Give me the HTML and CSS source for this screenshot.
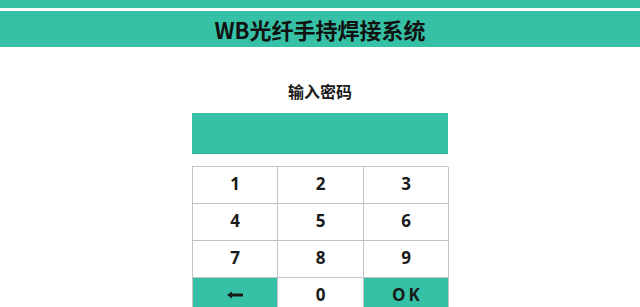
FILE: index.html
```html
<!DOCTYPE html>
<html lang="zh-CN">
<head>
    <meta charset="UTF-8">
    <meta name="viewport" content="width=device-width, initial-scale=1.0">
    <title>WB光纤手持焊接系统</title>
    <link rel="stylesheet" href="styles.css">
</head>
<body>
    <div class="top-strip"></div>
    <header class="header">
        <h1 class="title">WB光纤手持焊接系统</h1>
    </header>
    <main class="login">
        <div class="label">输入密码</div>
        <div class="password-box"></div>
        <div class="keypad">
            <button class="key">1</button>
            <button class="key">2</button>
            <button class="key">3</button>
            <button class="key">4</button>
            <button class="key">5</button>
            <button class="key">6</button>
            <button class="key">7</button>
            <button class="key">8</button>
            <button class="key">9</button>
            <button class="key key-action">
                <svg class="back-icon" width="16" height="8" viewBox="0 0 16 8">
                    <polygon points="0,4 5,0.5 5,7.5" fill="#1a1a1a"/>
                    <rect x="4" y="2.5" width="12" height="3" fill="#1a1a1a"/>
                </svg>
            </button>
            <button class="key">0</button>
            <button class="key key-action key-ok">OK</button>
        </div>
    </main>
</body>
</html>
```

FILE: styles.css
```css
body {
    margin: 0;
    padding: 0;
    background-color: white;
    font-family: "Open Sans", "Noto Sans CJK SC", sans-serif;
    color: #1a1a1a;
}

.top-strip {
    height: 8px;
    background-color: #36c1a6;
    margin-bottom: 3px;
}

.header {
    height: 36px;
    background-color: #36c1a6;
    display: flex;
    justify-content: center;
    align-items: center;
}

.title {
    margin: 0;
    font-family: "Noto Sans CJK SC", sans-serif;
    font-size: 22px;
    font-weight: bold;
    line-height: 1;
    color: #111;
}

.login {
    display: flex;
    flex-direction: column;
    align-items: center;
    padding-top: 35px;
}

.label {
    font-family: "Noto Sans CJK SC", sans-serif;
    font-size: 16px;
    font-weight: bold;
    line-height: 18px;
    height: 18px;
    margin-bottom: 13px;
}

.password-box {
    width: 256px;
    height: 40px;
    background-color: #36c1a6;
    border-bottom: 1px solid #2fae95;
    margin-bottom: 12px;
}

.keypad {
    display: grid;
    grid-template-columns: 85px 86px 85px;
    grid-auto-rows: 37px;
    width: 256px;
    border-top: 1px solid #c4c4c4;
    border-left: 1px solid #c4c4c4;
    box-sizing: border-box;
}

.key {
    display: flex;
    justify-content: center;
    align-items: center;
    background-color: white;
    border: none;
    border-right: 1px solid #c4c4c4;
    border-bottom: 1px solid #c4c4c4;
    padding: 0 0 3px 0;
    font-family: "Open Sans", sans-serif;
    font-size: 17px;
    font-weight: bold;
    color: #1a1a1a;
    cursor: pointer;
}

.key-action {
    background-color: #36c1a6;
}

.key-ok {
    letter-spacing: 3px;
    padding-left: 3px;
}
```
